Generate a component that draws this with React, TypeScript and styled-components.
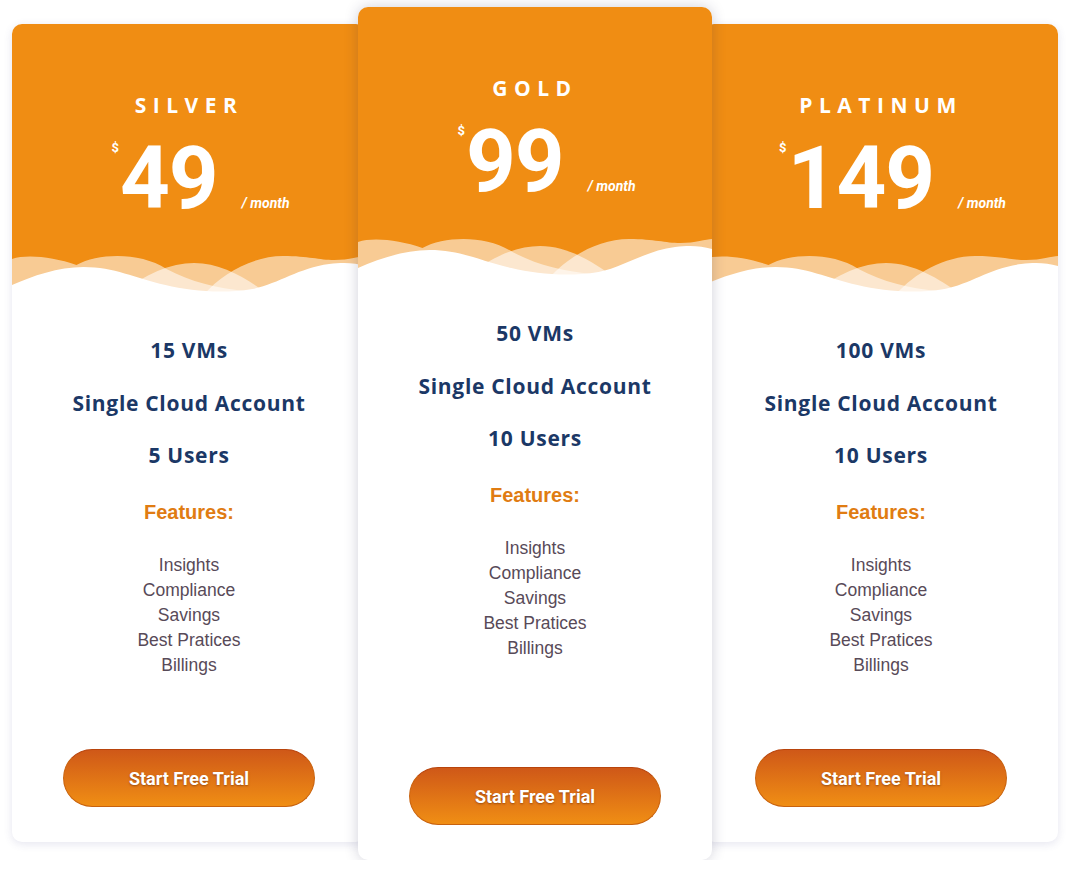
import React from 'react';
import styled, { createGlobalStyle } from 'styled-components';

interface Plan {
  name: string;
  price: string;
  vms: string;
  users: string;
  featured?: boolean;
}

const plans: Plan[] = [
  { name: 'SILVER', price: '49', vms: '15 VMs', users: '5 Users' },
  { name: 'GOLD', price: '99', vms: '50 VMs', users: '10 Users', featured: true },
  { name: 'PLATINUM', price: '149', vms: '100 VMs', users: '10 Users' },
];

const features = ['Insights', 'Compliance', 'Savings', 'Best Pratices', 'Billings'];

const Wave: React.FC = () => (
  <WaveSvg viewBox="0 0 346 40" preserveAspectRatio="none">
    <path
      d="M0,5 C15,0 40,3 63,11 C85,-1 125,-2 151,15 C175,28 200,34 228,37 L228,40 L0,40 Z"
      fill="#fff"
      fillOpacity="0.55"
    />
    <path
      d="M105,40 C130,20 155,9 178,9 C205,9 230,25 250,40 Z"
      fill="#fff"
      fillOpacity="0.55"
    />
    <path
      d="M188,40 C205,20 235,2 265,2 C290,2 300,6 315,6 C330,6 340,2 346,2 L346,40 Z"
      fill="#fff"
      fillOpacity="0.55"
    />
    <path
      d="M0,31 C20,22 45,13 70,13 C100,13 120,24 150,31 C175,37 205,40 235,35 C260,30 280,14 310,10 C325,8 335,9 346,12 L346,40 L0,40 Z"
      fill="#fff"
    />
  </WaveSvg>
);

const PricingCard: React.FC<{ plan: Plan }> = ({ plan }) => (
  <Card $featured={plan.featured}>
    <Header>
      <Title>{plan.name}</Title>
      <PriceRow>
        <Currency>$</Currency>
        <Amount>{plan.price}</Amount>
        <Period>/ month</Period>
      </PriceRow>
    </Header>
    <Wave />
    <Body>
      <Spec>{plan.vms}</Spec>
      <Spec>Single Cloud Account</Spec>
      <Spec>{plan.users}</Spec>
      <FeaturesTitle>Features:</FeaturesTitle>
      <FeatureList>
        {features.map((f) => (
          <li key={f}>{f}</li>
        ))}
      </FeatureList>
    </Body>
    <TrialButton>Start Free Trial</TrialButton>
  </Card>
);

const App: React.FC = () => (
  <>
    <GlobalStyle />
    <Pricing>
      {plans.map((p) => (
        <PricingCard key={p.name} plan={p} />
      ))}
    </Pricing>
  </>
);

const GlobalStyle = createGlobalStyle`
  body {
    margin: 0;
    background: #ffffff;
    font-family: "Liberation Sans", Arial, sans-serif;
  }
`;

const Pricing = styled.div`
  display: flex;
  align-items: flex-start;
  padding: 24px 0 0 12px;
`;

const Card = styled.div<{ $featured?: boolean }>`
  position: relative;
  z-index: ${(p) => (p.$featured ? 2 : 1)};
  display: flex;
  flex-direction: column;
  width: 354px;
  height: ${(p) => (p.$featured ? 853 : 818)}px;
  margin-top: ${(p) => (p.$featured ? -17 : 0)}px;
  background: #ffffff;
  border-radius: 10px;
  overflow: hidden;
  box-shadow: ${(p) =>
    p.$featured
      ? '0 0 14px rgba(40, 40, 80, 0.22)'
      : '0 2px 8px rgba(70, 70, 140, 0.14)'};

  & + & {
    margin-left: -8px;
  }
`;

const Header = styled.div`
  background: #f08d13;
  padding-top: 66px;
  height: 164px;
  text-align: center;
  color: #ffffff;
`;

const Title = styled.div`
  font-family: "Open Sans", sans-serif;
  font-weight: 700;
  font-size: 21px;
  line-height: 30px;
  letter-spacing: 6.5px;
`;

const PriceRow = styled.div`
  display: flex;
  justify-content: center;
  align-items: baseline;
  margin-top: 18px;
  padding-left: 23px;
`;

const Currency = styled.span`
  align-self: flex-start;
  font-family: Roboto, sans-serif;
  font-weight: 700;
  font-size: 13px;
  line-height: 16px;
  margin-top: 2px;
  margin-right: 1px;
`;

const Amount = styled.span`
  font-family: Roboto, sans-serif;
  font-weight: 700;
  font-size: 87px;
  line-height: 80px;
  letter-spacing: -1px;
`;

const Period = styled.span`
  font-family: Roboto, sans-serif;
  font-weight: 700;
  font-style: italic;
  font-size: 14px;
  line-height: 16px;
  margin-left: 24px;
`;

const WaveSvg = styled.svg`
  display: block;
  width: 100%;
  height: 40px;
  background: #f08d13;
`;

const Body = styled.div`
  display: flex;
  flex-direction: column;
  align-items: center;
  padding-top: 30px;
`;

const Spec = styled.div`
  font-family: "Open Sans", sans-serif;
  font-weight: 700;
  font-size: 21px;
  line-height: 52.5px;
  letter-spacing: 0.7px;
  color: #1b3866;
`;

const FeaturesTitle = styled.div`
  margin-top: 15px;
  font-weight: 700;
  font-size: 20px;
  line-height: 30px;
  color: #e07c12;
`;

const FeatureList = styled.ul`
  list-style: none;
  margin: 26px 0 0;
  padding: 0;
  text-align: center;
  font-size: 17.5px;
  line-height: 25px;
  color: #584a58;
`;

const TrialButton = styled.button`
  align-self: center;
  margin: auto 0 35px;
  width: 252px;
  height: 58px;
  border: 1px solid #c8620e;
  border-top-color: #b8440c;
  border-radius: 29px;
  background: linear-gradient(to bottom, #cf5818, #f08e14);
  color: #ffffff;
  font-family: Roboto, sans-serif;
  font-weight: 700;
  font-size: 18px;
  text-shadow: 0 1px 2px rgba(90, 30, 0, 0.5);
  cursor: pointer;
`;

export default App;
